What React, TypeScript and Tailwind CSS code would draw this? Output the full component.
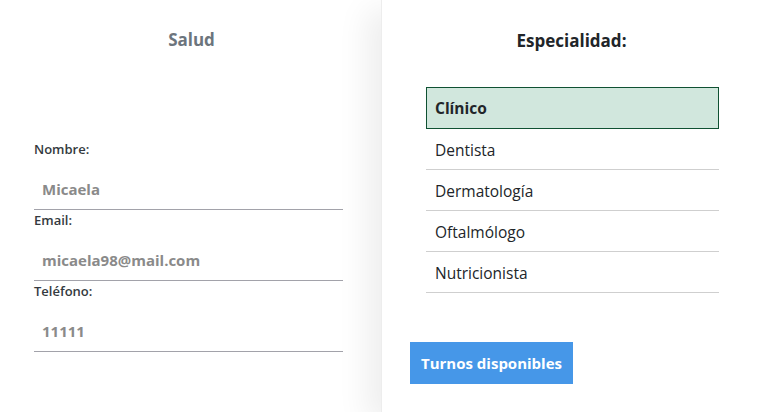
import { useState } from "react";

const especialidades = ["Clínico", "Dentista", "Dermatología", "Oftalmólogo", "Nutricionista"];

const campos = [
  { label: "Nombre:", value: "Micaela" },
  { label: "Email:", value: "micaela98@mail.com" },
  { label: "Teléfono:", value: "11111" },
];

export default function App() {
  const [selected, setSelected] = useState("Clínico");

  return (
    <div className="flex h-[412px] w-full bg-white font-['Open_Sans',sans-serif] text-[#212529]">
      {/* Datos del paciente */}
      <div className="w-[381px] shrink-0">
        <h2 className="pt-[28px] pl-[2px] text-center text-[17px] font-bold leading-[24px] text-[#6c757d]">Salud</h2>
        <div className="mt-[87px] flex flex-col pl-[34px] pr-[38px]">
          {campos.map((c) => (
            <div key={c.label} className="flex flex-col">
              <label className="text-[13px] font-semibold leading-[20px] text-[#343a40]">{c.label}</label>
              <input
                readOnly
                value={c.value}
                className="h-[51px] w-full border-b border-[#a2a2aa] px-[8px] pt-[18px] pb-[8px] text-[15px] font-bold leading-[24px] text-[#8a8a8a] outline-none"
              />
            </div>
          ))}
        </div>
      </div>

      {/* Especialidad */}
      <div className="relative z-10 flex-1 border-l border-[#ededed] shadow-[-14px_10px_30px_rgba(0,0,0,0.07)]">
        <h2 className="pt-[29px] text-center text-[17px] font-bold leading-[24px] text-[#212529]">Especialidad:</h2>
        <ul className="mt-[34px] pl-[44px] pr-[42px]">
          {especialidades.map((e) => {
            const active = e === selected;
            return (
              <li
                key={e}
                onClick={() => setSelected(e)}
                className={
                  active
                    ? "flex h-[42px] cursor-pointer items-center border border-[#0f5132] bg-[#d1e7dd] px-[8px] pt-[2px] text-[15.5px] font-bold"
                    : "flex h-[41px] cursor-pointer items-center border-b border-[#cfcfcf] px-[9px] pt-[3px] text-[15.5px]"
                }
              >
                {e}
              </li>
            );
          })}
        </ul>
        <button className="ml-[28px] mt-[49px] h-[42px] w-[163px] bg-[#4697e8] text-[15px] font-bold text-white">
          Turnos disponibles
        </button>
      </div>
    </div>
  );
}
